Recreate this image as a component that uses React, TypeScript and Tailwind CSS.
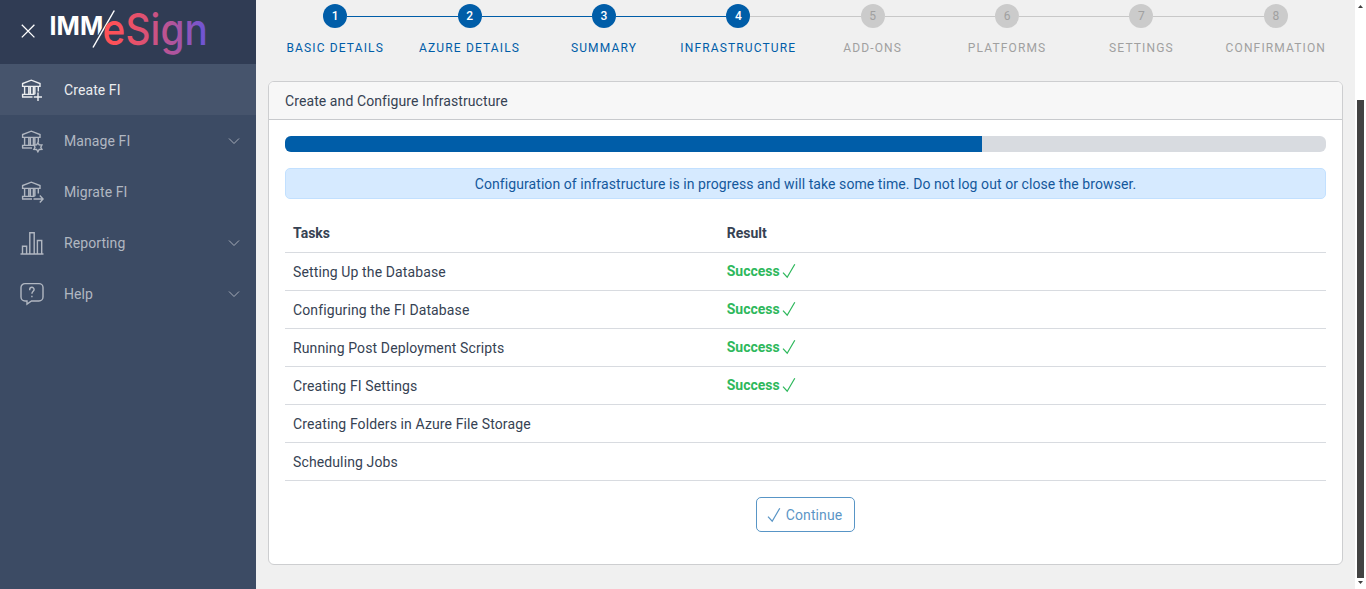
// src/App.tsx

import type { ReactNode } from 'react';
import clsx from 'clsx';

const steps = [
  'Basic Details',
  'Azure Details',
  'Summary',
  'Infrastructure',
  'Add-ons',
  'Platforms',
  'Settings',
  'Confirmation',
];

const CURRENT_STEP = 4;
const PROGRESS = 67;

const tasks = [
  { name: 'Setting Up the Database', done: true },
  { name: 'Configuring the FI Database', done: true },
  { name: 'Running Post Deployment Scripts', done: true },
  { name: 'Creating FI Settings', done: true },
  { name: 'Creating Folders in Azure File Storage', done: false },
  { name: 'Scheduling Jobs', done: false },
];

function Icon({ children }: { children: ReactNode }) {
  return (
    <svg
      className="w-6 h-6 shrink-0"
      viewBox="0 0 24 24"
      fill="none"
      stroke="currentColor"
      strokeWidth="1.4"
    >
      {children}
    </svg>
  );
}

// Bank building shared by the three FI entries
function Bank() {
  return (
    <>
      <path d="M2.6 8.4V5.6L11.3 2.2L20 5.6V8.4Z" />
      <path d="M4.6 8.4V16.2M8.8 8.4V16.2M10.4 8.4V16.2M13.4 8.4V16.2M14.9 8.4V16.2M18.3 8.4V13.4" />
      <path d="M2.6 19V16.4H14.6" />
    </>
  );
}

function CheckIcon({ className }: { className?: string }) {
  return (
    <svg
      className={clsx('w-3.5 h-4 shrink-0', className)}
      viewBox="0 0 14 16"
      fill="none"
      stroke="currentColor"
      strokeWidth="1.2"
    >
      <path d="M1 9.6L5.2 14.2L12.8 1.2" />
    </svg>
  );
}

const menu = [
  {
    label: 'Create FI',
    active: true,
    icon: (
      <Icon>
        <Bank />
        <path d="M2 19H12.5M18 14.6V23M13.8 19H22" />
      </Icon>
    ),
  },
  {
    label: 'Manage FI',
    expandable: true,
    icon: (
      <Icon>
        <Bank />
        <path d="M2 19H12" />
        <path d="M17.9 13.9L19.2 15.9L21.9 16L20.8 18.2L21.9 20.4L19.2 20.5L17.9 22.8L16.6 20.5L13.9 20.4L15 18.2L13.9 16L16.6 15.9Z" />
      </Icon>
    ),
  },
  {
    label: 'Migrate FI',
    icon: (
      <Icon>
        <Bank />
        <path d="M2 19H12M13.5 19H23M19.8 15.6L23.1 19L19.8 22.4" />
      </Icon>
    ),
  },
  {
    label: 'Reporting',
    expandable: true,
    icon: (
      <Icon>
        <path d="M0.5 23H23.5M2.5 23V15.2H6.6V23M9.8 23V1.8H14.2V23M17.4 23V9.5H21.7V23" />
      </Icon>
    ),
  },
  {
    label: 'Help',
    expandable: true,
    icon: (
      <Icon>
        <path d="M5 1.6H19A4 4 0 0 1 23 5.6V15A4 4 0 0 1 19 19H11.5L7 22.1V19H5A4 4 0 0 1 1 15V5.6A4 4 0 0 1 5 1.6Z" />
        <path d="M9.7 8.3V7.5A2.2 2.2 0 0 1 14.1 7.5C14.1 9.3 11.9 9.3 11.9 11.8M11.9 13.7V15.3" />
      </Icon>
    ),
  },
];

function Logo() {
  return (
    <svg className="w-44 h-16 overflow-visible" viewBox="48 0 176 64">
      <defs>
        <linearGradient id="brand" gradientUnits="userSpaceOnUse" x1="112" y1="30" x2="206" y2="30">
          <stop offset="0" stopColor="#ff5157" />
          <stop offset="0.3" stopColor="#e2516e" />
          <stop offset="0.7" stopColor="#a855a4" />
          <stop offset="1" stopColor="#6b55d8" />
        </linearGradient>
      </defs>
      <text
        x="49.5"
        y="35"
        fill="#fff"
        className="font-['Inter'] font-bold text-[26px]"
        textLength="54"
        lengthAdjust="spacingAndGlyphs"
      >
        IMM
      </text>
      <path d="M93 47.5L114.3 10.5" stroke="#303c54" strokeWidth="3.6" />
      <path d="M93 47.5L114.3 10.5" stroke="#fff" strokeWidth="1.5" />
      <text
        x="102.5"
        y="45"
        fill="url(#brand)"
        className="font-['Inter'] font-medium text-[44px]"
        textLength="105.5"
        lengthAdjust="spacingAndGlyphs"
      >
        eSign
      </text>
    </svg>
  );
}

function Sidebar() {
  return (
    <aside className="w-64 shrink-0 bg-[#3c4b64]">
      <div className="flex items-center h-16 pl-5 bg-[#303c54]">
        <svg
          className="w-4 h-4 mr-3 shrink-0 text-white"
          viewBox="0 0 16 16"
          fill="none"
          stroke="currentColor"
          strokeWidth="1.3"
        >
          <path d="M1.8 0.8L14.4 13.4M14.4 0.8L1.8 13.4" />
        </svg>
        <Logo />
      </div>
      <nav>
        {menu.map((item) => (
          <a
            key={item.label}
            className={clsx(
              'flex items-center h-[51px] pl-5 pr-4 text-sm',
              item.active ? 'bg-[#46546c] text-[#ebedef]' : 'text-[#b1b7c1]'
            )}
          >
            {item.icon}
            <span className="ml-5 flex-1">{item.label}</span>
            {item.expandable && (
              <svg
                className="w-3 h-3"
                viewBox="0 0 12 12"
                fill="none"
                stroke="currentColor"
                strokeWidth="0.9"
              >
                <path d="M1 3.5L6 8.5L11 3.5" />
              </svg>
            )}
          </a>
        ))}
      </nav>
    </aside>
  );
}

function Stepper() {
  return (
    <ol className="flex pt-1">
      {steps.map((label, i) => {
        const n = i + 1;
        const reached = n <= CURRENT_STEP;
        return (
          <li key={label} className="flex-1 flex flex-col items-center">
            <div className="flex items-center w-full">
              <div
                className={clsx(
                  'flex-1 h-px',
                  i > 0 && (reached ? 'bg-[#005da8]' : 'bg-[#c8c8c8]')
                )}
              />
              <div
                className={clsx(
                  'flex items-center justify-center w-6 h-6 rounded-full text-xs tracking-normal',
                  reached ? 'bg-[#005da8] text-white font-medium' : 'bg-[#cbcbcb] text-[#a0a0a0]'
                )}
              >
                {n}
              </div>
              <div
                className={clsx(
                  'flex-1 h-px',
                  n < steps.length && (n < CURRENT_STEP ? 'bg-[#005da8]' : 'bg-[#c8c8c8]')
                )}
              />
            </div>
            <span
              className={clsx(
                'mt-3 text-xs uppercase tracking-[1.14px]',
                reached ? 'text-[#005da8]' : 'text-[#a0a0a0]'
              )}
            >
              {label}
            </span>
          </li>
        );
      })}
    </ol>
  );
}

function Scrollbar() {
  return (
    <div className="flex flex-col items-center w-[11px] shrink-0 bg-white">
      <svg className="w-[7px] h-2.5 mt-0.5" viewBox="0 0 7 10" fill="#404040">
        <path d="M1 6L3.5 3L6 6Z" />
      </svg>
      <div className="mt-[88px] w-[7px] h-[478px] bg-[#424242]" />
      <svg className="w-[7px] h-2" viewBox="0 0 7 8" fill="#404040">
        <path d="M1 3L3.5 6L6 3Z" />
      </svg>
    </div>
  );
}

export default function App() {
  return (
    <div className="flex h-[589px] overflow-hidden bg-[#f0f0f0] font-['Roboto',sans-serif] text-sm tracking-[0.09px] text-[#364253]">
      <Sidebar />

      <main className="flex-1 px-3">
        <Stepper />

        <section className="mt-[25px] h-[484px] rounded-md border border-[#cdced0] bg-white overflow-hidden">
          <header className="h-[38px] px-4 flex items-center border-b border-[#c8cacd] bg-[#f7f7f7]">
            Create and Configure Infrastructure
          </header>

          <div className="p-4">
            <div className="h-4 rounded-md bg-[#d8dbe0] overflow-hidden">
              <div className="h-full bg-[#005da8]" style={{ width: `${PROGRESS}%` }} />
            </div>

            <div className="mt-4 h-[31px] flex items-center justify-center rounded-[5px] border border-[#c2e0ff] bg-[#d6eaff] tracking-[0.075px] text-[#14589c]">
              Configuration of infrastructure is in progress and will take some time. Do not log
              out or close the browser.
            </div>

            <table className="mt-4 w-full table-fixed text-left">
              <thead className="tracking-normal">
                <tr className="h-[37px] border-b border-[#d8dbe0]">
                  <th className="w-5/12 px-2 font-bold">Tasks</th>
                  <th className="px-2 font-bold">Result</th>
                </tr>
              </thead>
              <tbody>
                {tasks.map((task) => (
                  <tr key={task.name} className="h-[38px] border-b border-[#d8dbe0]">
                    <td className="px-2 pt-0.5 tracking-[0.12px]">{task.name}</td>
                    <td className="px-2">
                      {task.done && (
                        <span className="flex items-center font-bold tracking-normal text-[#2eb85c]">
                          Success
                          <CheckIcon className="ml-0.5" />
                        </span>
                      )}
                    </td>
                  </tr>
                ))}
              </tbody>
            </table>

            <button
              disabled
              className="mt-4 mx-auto flex items-center justify-center gap-[5px] w-[99px] h-[35px] pt-0.5 pr-0.5 rounded-[5px] border border-[#005da8] text-[#005da8] opacity-65"
            >
              <CheckIcon />
              Continue
            </button>
          </div>
        </section>
      </main>

      <Scrollbar />
    </div>
  );
}
